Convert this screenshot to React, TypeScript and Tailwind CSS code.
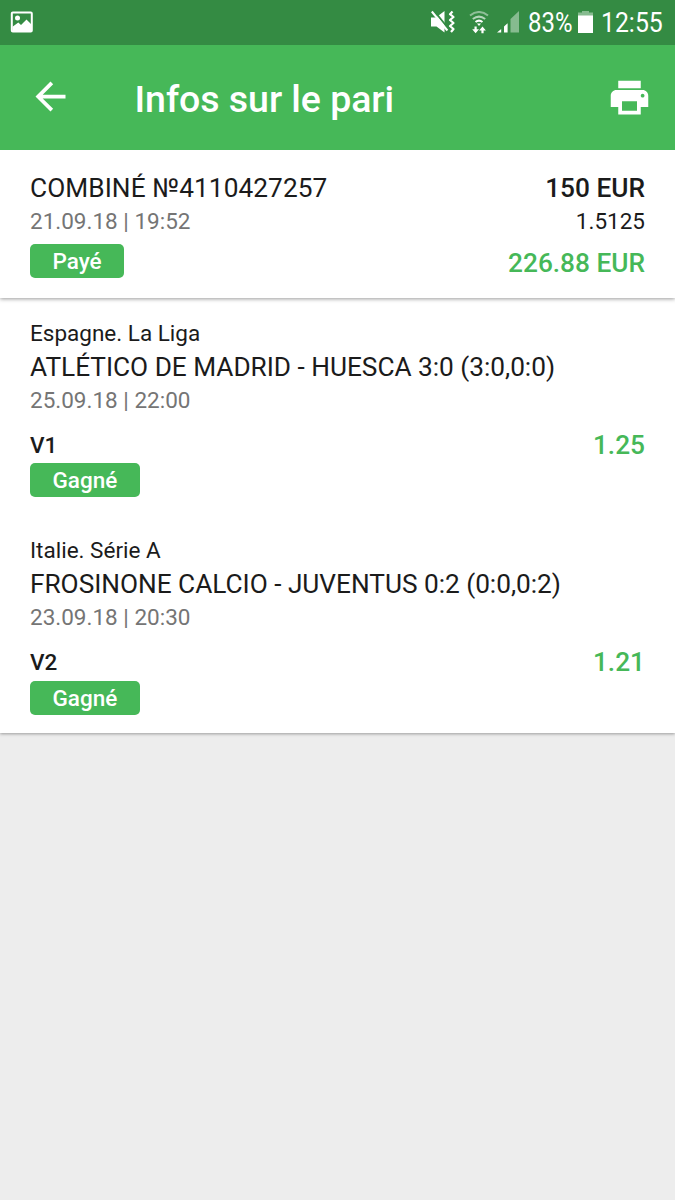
import React from 'react';
import { MdArrowBack, MdPrint } from 'react-icons/md';

type Bet = {
  league: string;
  match: string;
  date: string;
  pick: string;
  odds: string;
  status: string;
};

const bets: Bet[] = [
  {
    league: 'Espagne. La Liga',
    match: 'ATLÉTICO DE MADRID - HUESCA 3:0 (3:0,0:0)',
    date: '25.09.18 | 22:00',
    pick: 'V1',
    odds: '1.25',
    status: 'Gagné',
  },
  {
    league: 'Italie. Série A',
    match: 'FROSINONE CALCIO - JUVENTUS 0:2 (0:0,0:2)',
    date: '23.09.18 | 20:30',
    pick: 'V2',
    odds: '1.21',
    status: 'Gagné',
  },
];

const PictureIcon = () => (
  <svg className="h-[22px] w-[23px]" viewBox="0 0 23 22" fill="none">
    <rect x="1.8" y="1.4" width="20" height="19" rx="1" stroke="white" strokeWidth="2" />
    <circle cx="7.5" cy="7" r="2.5" fill="white" />
    <path d="M2.5 15.8L8.3 11.5L11 14L16.5 8.5L21.5 13.5V20H2.5Z" fill="white" />
  </svg>
);

const MuteIcon = () => (
  <svg className="h-6 w-[26px]" viewBox="0 0 26 24" fill="none">
    <path d="M1 7.5H6L14.5 1V22.5L6.5 16.5H1Z" fill="white" />
    <path d="M3.4 0L19 19.5" stroke="#348b43" strokeWidth="2" />
    <path d="M1.8 1.5L17.4 20.5" stroke="white" strokeWidth="2" />
    <path
      d="M22.5 1.5L20 4.2L23.5 7L20 10L23.5 13L20 16L23.5 19L21 22"
      stroke="white"
      strokeWidth="2.2"
      strokeLinejoin="round"
    />
  </svg>
);

const WifiIcon = () => (
  <svg className="h-6 w-5" viewBox="0 0 20 24" fill="none">
    <path d="M1 4.5Q10 -2.5 19 4.5" stroke="#8fbf98" strokeWidth="2" />
    <path d="M3.8 8Q10 3.2 16.2 8" stroke="#b4d5ba" strokeWidth="2" />
    <path d="M6.5 11Q10 8.2 13.5 11" stroke="white" strokeWidth="2" />
    <path d="M8 12.5H12L10 15Z" fill="white" />
    <path d="M5.5 15.5H7.7V18.3H10L6.6 22.3L3.2 18.3H5.5Z" fill="white" />
    <path d="M12.4 22.3V19.5H10.1L13.5 15.5L16.9 19.5H14.6V22.3Z" fill="white" />
  </svg>
);

const SignalIcon = () => (
  <svg className="h-[22px] w-[22px]" viewBox="0 0 22 22">
    <path d="M0 21.5L4.2 18V21.5Z" fill="white" />
    <path d="M7 15.5L10.6 12.2V21.5H7Z" fill="white" />
    <path d="M13.5 8L22 0V21.5H13.5Z" fill="#86bb8f" />
  </svg>
);

const BatteryIcon = () => (
  <svg className="h-[22px] w-[15px]" viewBox="0 0 15 22">
    <path d="M4 0H11V1.5H15V5H0V1.5H4Z" fill="#86bb8f" />
    <path d="M0 4.5H15V22H0Z" fill="white" />
  </svg>
);

const StatusBar = () => (
  <div className="flex h-[45px] items-center bg-[#348b43] pl-[10px] pr-3 text-white">
    <div className="-mt-0.5">
      <PictureIcon />
    </div>
    <div className="ml-auto flex items-center">
      <div className="-mt-px">
        <MuteIcon />
      </div>
      <div className="ml-[13px]">
        <WifiIcon />
      </div>
      <div className="-mt-px ml-[8px]">
        <SignalIcon />
      </div>
      <span className="ml-[9px] w-[45px] whitespace-nowrap">
        <span className="inline-block origin-left scale-x-[0.84] text-[28.5px] leading-[45px]">83%</span>
      </span>
      <div className="-mt-px ml-[5px]">
        <BatteryIcon />
      </div>
      <span className="ml-2 w-[62px] whitespace-nowrap">
        <span className="inline-block origin-left scale-x-[0.87] text-[28.5px] leading-[45px]">12:55</span>
      </span>
    </div>
  </div>
);

const Toolbar = () => (
  <header className="relative z-10 flex h-[105px] items-center bg-[#46b858] pl-7 pr-[23px] text-white">
    <MdArrowBack className="-mt-0.5 size-[45px]" />
    <h1 className="ml-[61.5px] mt-[3px] text-[37.5px] font-medium leading-[45px] tracking-[-0.05px]">Infos sur le pari</h1>
    <MdPrint className="ml-auto size-[45px]" />
  </header>
);

const Badge = ({ children }: { children: React.ReactNode }) => (
  <span className="block h-[34px] w-fit rounded-[5px] bg-[#46b858] px-[22.5px] text-[22.5px] font-medium leading-[34px] text-white">
    {children}
  </span>
);

const Summary = () => (
  <section className="relative flex h-[148px] justify-between bg-white px-[30px] pt-[22px] shadow-[0_1px_4px_rgba(0,0,0,0.4)]">
    <div>
      <p className="text-[26.25px] leading-[33px] tracking-[0.06px]">COMBINÉ №4110427257</p>
      <p className="mb-1.5 text-[22.5px] leading-[33px] text-[#757575]">21.09.18 | 19:52</p>
      <Badge>Payé</Badge>
    </div>
    <div className="text-right">
      <p className="text-[26.25px] font-medium leading-[33px]">150 EUR</p>
      <p className="text-[22.5px] leading-[33px]">1.5125</p>
      <p className="mt-[9px] text-[26.25px] font-medium leading-[33px] text-[#46b858]">226.88 EUR</p>
    </div>
  </section>
);

const BetItem = ({ bet }: { bet: Bet }) => (
  <li className="h-[217.5px] px-[30px] pt-[18.9px]">
    <p className="text-[22.5px] leading-[33px]">{bet.league}</p>
    <p className="text-[26.25px] leading-[34px] tracking-[-0.03px]">{bet.match}</p>
    <p className="text-[22.5px] leading-[33px] text-[#757575]">{bet.date}</p>
    <div className="mt-3 flex items-center justify-between font-medium leading-[33px]">
      <span className="text-[22.5px]">{bet.pick}</span>
      <span className="text-[26.25px] text-[#46b858]">{bet.odds}</span>
    </div>
    <div className="mt-[1.2px]">
      <Badge>{bet.status}</Badge>
    </div>
  </li>
);

const App = () => {
  return (
    <main className="min-h-screen bg-[#ededed] font-['Roboto',sans-serif] text-[#1b1b1b]">
      <StatusBar />
      <Toolbar />
      <Summary />
      <ul className="bg-white shadow-[0_1px_3px_rgba(0,0,0,0.35)]">
        {bets.map((bet) => (
          <BetItem key={bet.pick} bet={bet} />
        ))}
      </ul>
    </main>
  );
};

export default App;
